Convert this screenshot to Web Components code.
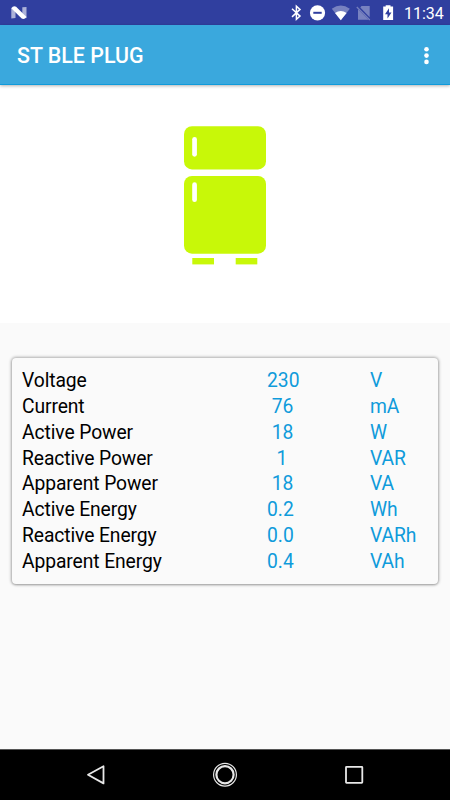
<!DOCTYPE html>
<html lang="en">
<head>
<meta charset="utf-8">
<title>ST BLE PLUG</title>
<style>
  body {
    margin: 0;
    font-family: Roboto, sans-serif;
  }
</style>
</head>
<body>
<plug-screen></plug-screen>

<script>
class StatusBar extends HTMLElement {
  constructor() {
    super();
    this.attachShadow({ mode: 'open' }).innerHTML = `
      <style>
        :host {
          display: flex;
          align-items: center;
          height: 25px;
          background: #303f9f;
          color: #fff;
        }
        svg { display: block; width: 397px; height: 25px; flex: none; }
        span { margin-left: 7px; padding-top: 3px; font-size: 16px; line-height: 20px; }
      </style>
      <svg viewBox="0 0 397 25" fill="#fff">
        <g>
          <path opacity=".6" d="M11.3 8l4.2 3v7l-4.2.5zM22.3 7.3l4.2-.4v11.4l-4.2-2.8z"/>
          <path d="M11.3 8.2q1.8-2.6 4.8-1.5l10.4 10.3q-1.9 2.6-4.8 1.6z"/>
        </g>
        <path fill="none" stroke="#fff" stroke-width="1.5" d="M292 8.7l8 7.4-3.6 3.3V6.2l3.6 3.2-8 7.5"/>
        <circle cx="317.5" cy="12.8" r="7.6"/>
        <path fill="#303f9f" d="M313.3 11.8h8.4v2h-8.4z"/>
        <path opacity=".35" d="M331.8 8.7q9-6.6 18 0l-9 11.6z"/>
        <path d="M335 12.9q5.8-3.8 11.6 0l-5.8 7.4z"/>
        <path opacity=".35" d="M361.5 6h8.2v11.2l-9.4-9.6zM358 9.2l10.6 10.6H358z"/>
        <path fill="none" stroke="#757fbd" stroke-width="1.3" d="M356.8 7l13 13"/>
        <path d="M383.2 6.6h2.5V5.2h4.8v1.4h2.6V20h-9.9z"/>
        <path fill="#303f9f" d="M389 8.2l-4 6h2.5v4.3l4-6H389z"/>
      </svg>
      <span><slot></slot></span>
    `;
  }
}

class AppBar extends HTMLElement {
  constructor() {
    super();
    this.attachShadow({ mode: 'open' }).innerHTML = `
      <style>
        :host {
          display: flex;
          align-items: center;
          justify-content: space-between;
          box-sizing: border-box;
          height: 60px;
          padding: 2px 21px 0 17px;
          background: #3aa8dd;
          border-bottom: 1px solid #0f9bdb;
          box-shadow: 0 1px 3px rgba(0, 0, 0, .3);
          color: #fff;
          position: relative;
        }
        h1 { margin: 0; font-size: 21.4px; font-weight: 500; line-height: 28px; }
        svg { display: block; }
      </style>
      <h1><slot></slot></h1>
      <svg width="5" height="18" viewBox="0 0 5 18" fill="#fff">
        <circle cx="2.5" cy="2.3" r="2.3"/>
        <circle cx="2.5" cy="8.6" r="2.3"/>
        <circle cx="2.5" cy="14.9" r="2.3"/>
      </svg>
    `;
  }
}

class FridgeIcon extends HTMLElement {
  constructor() {
    super();
    this.attachShadow({ mode: 'open' }).innerHTML = `
      <style>
        :host {
          display: flex;
          justify-content: center;
          box-sizing: border-box;
          height: 238px;
          padding-top: 41px;
          background: #fff;
        }
      </style>
      <svg width="82" height="139" viewBox="0 0 82 139" fill="#c8f808">
        <rect y=".2" width="82" height="43.2" rx="8"/>
        <rect y="50" width="82" height="77.7" rx="8"/>
        <rect x="8.3" y="132" width="21.7" height="6.4"/>
        <rect x="51.7" y="132" width="21.6" height="6.4"/>
        <rect x="8.2" y="11" width="4.7" height="19.7" rx="2.35" fill="#fff"/>
        <rect x="8.2" y="56.3" width="4.7" height="19.7" rx="2.35" fill="#fff"/>
      </svg>
    `;
  }
}

class MeasureRow extends HTMLElement {
  constructor() {
    super();
    this.attachShadow({ mode: 'open' }).innerHTML = `
      <style>
        :host {
          display: grid;
          grid-template-columns: 245px 103px 1fr;
          font-size: 19.3px;
          line-height: 25.85px;
          color: #000;
        }
        .label, .unit { letter-spacing: -.1px; }
        /* values are padded to three characters, so keep the spaces */
        .value { white-space: pre; }
        .value, .unit { color: #0f9bdb; }
      </style>
      <span class="label"></span>
      <span class="value"></span>
      <span class="unit"></span>
    `;
  }

  connectedCallback() {
    for (const name of ['label', 'value', 'unit']) {
      this.shadowRoot.querySelector('.' + name).textContent = this.getAttribute(name);
    }
  }
}

class MeasureCard extends HTMLElement {
  constructor() {
    super();
    this.attachShadow({ mode: 'open' }).innerHTML = `
      <style>
        :host {
          display: block;
          box-sizing: border-box;
          height: 226px;
          margin: 35px 12px 0;
          padding: 10px 9px 0 10px;
          background: #fafafa;
          border-radius: 4px;
          box-shadow: 0 0 3px 1px rgba(0, 0, 0, .3), 0 1px 2px rgba(0, 0, 0, .15);
        }
      </style>
      <slot></slot>
    `;
  }
}

class NavBar extends HTMLElement {
  constructor() {
    super();
    this.attachShadow({ mode: 'open' }).innerHTML = `
      <style>
        :host {
          display: block;
          box-sizing: border-box;
          height: 51px;
          background: #000;
          border-top: 1px solid #555;
        }
        svg { display: block; }
      </style>
      <svg width="450" height="50" viewBox="0 0 450 50" fill="none" stroke="#e8e8e8" stroke-width="1.8" stroke-linejoin="round">
        <path d="M103.5 16.2v17.2L88 24.8z"/>
        <circle cx="225" cy="24.7" r="11.4" stroke-width="1.2"/>
        <circle cx="225" cy="24.7" r="8.6" stroke-width="2.2"/>
        <rect x="346" y="16.8" width="16.3" height="16" rx=".5"/>
      </svg>
    `;
  }
}

class PlugScreen extends HTMLElement {
  rows = [
    ['Voltage', '230', 'V'],
    ['Current', ' 76', 'mA'],
    ['Active Power', ' 18', 'W'],
    ['Reactive Power', '  1', 'VAR'],
    ['Apparent Power', ' 18', 'VA'],
    ['Active Energy', '0.2', 'Wh'],
    ['Reactive Energy', '0.0', 'VARh'],
    ['Apparent Energy', '0.4', 'VAh'],
  ];

  constructor() {
    super();
    const rows = this.rows.map(([label, value, unit]) =>
      `<measure-row label="${label}" value="${value}" unit="${unit}"></measure-row>`).join('');

    this.attachShadow({ mode: 'open' }).innerHTML = `
      <style>
        :host {
          display: flex;
          flex-direction: column;
          width: 450px;
          height: 800px;
          overflow: hidden;
          background: #fafafa;
        }
        main { flex: 1; }
      </style>
      <status-bar>11:34</status-bar>
      <app-bar>ST BLE PLUG</app-bar>
      <main>
        <fridge-icon></fridge-icon>
        <measure-card>${rows}</measure-card>
      </main>
      <nav-bar></nav-bar>
    `;
  }
}

customElements.define('status-bar', StatusBar);
customElements.define('app-bar', AppBar);
customElements.define('fridge-icon', FridgeIcon);
customElements.define('measure-row', MeasureRow);
customElements.define('measure-card', MeasureCard);
customElements.define('nav-bar', NavBar);
customElements.define('plug-screen', PlugScreen);
</script>
</body>
</html>
